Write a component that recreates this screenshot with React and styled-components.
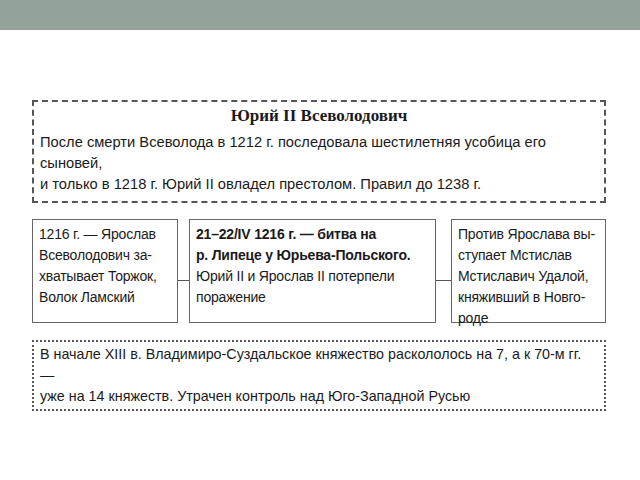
import React from "react";
import styled, { createGlobalStyle } from "styled-components";

const G = createGlobalStyle`
  html,body{margin:0;padding:0;background:#fff;width:640px;height:480px;overflow:hidden;}
  body{font-family:"Liberation Sans",Arial,sans-serif;color:#1a1a1a;}
`;
const Top = styled.div`height:30px;background:#93a399;`;
const Page = styled.div`padding:70px 34px 0 32px;display:flex;flex-direction:column;`;
const DashBox = styled.div`
  border:2px ${p => p.$dot ? "dotted" : "dashed"} #555;
  padding:${p => p.$pad};
`;
const Title = styled.div`
  font-family:"Liberation Serif",serif;font-weight:bold;font-size:17px;text-align:center;margin-bottom:6px;
`;
const Text = styled.div`font-size:${p => p.$fs || 14}px;line-height:21px;`;
const Row = styled.div`display:flex;align-items:stretch;margin:16px 0 17px 0;`;
const Cell = styled.div`
  border:1.5px solid #666;padding:4px 6px;width:${p => p.$w}px;box-sizing:border-box;
  font-size:14px;line-height:21px;letter-spacing:-0.2px;height:104px;
`;
const Link = styled.div`width:${p => p.$w}px;align-self:center;border-top:1.5px solid #555;margin-top:18px;`;
const B = styled.b``;

export default function App(){
  return (<>
    <G/>
    <Top/>
    <Page>
      <DashBox $pad="4px 6px 6px 6px">
        <Title>Юрий II Всеволодович</Title>
        <Text $fs={14.7}>После смерти Всеволода в 1212 г. последовала шестилетняя усобица его сыновей,<br/>и только в 1218 г. Юрий II овладел престолом. Правил до 1238 г.</Text>
      </DashBox>
      <Row>
        <Cell $w={146}>1216 г. — Ярослав Всеволодович за-хватывает Торжок, Волок Ламский</Cell>
        <Link $w={11}/>
        <Cell $w={247}><B>21–22/IV 1216 г. — битва на<br/>р. Липеце у Юрьева-Польского.</B><br/>Юрий II и Ярослав II потерпели поражение</Cell>
        <Link $w={15}/>
        <Cell $w={155}>Против Ярослава вы-ступает Мстислав Мстиславич Удалой, княживший в Новго-роде</Cell>
      </Row>
      <DashBox $dot $pad="2px 6px 2px 6px">
        <Text $fs={14.3}>В начале XIII в. Владимиро-Суздальское княжество раскололось на 7, а к 70-м гг. —<br/>уже на 14 княжеств. Утрачен контроль над Юго-Западной Русью</Text>
      </DashBox>
    </Page>
  </>);
}
